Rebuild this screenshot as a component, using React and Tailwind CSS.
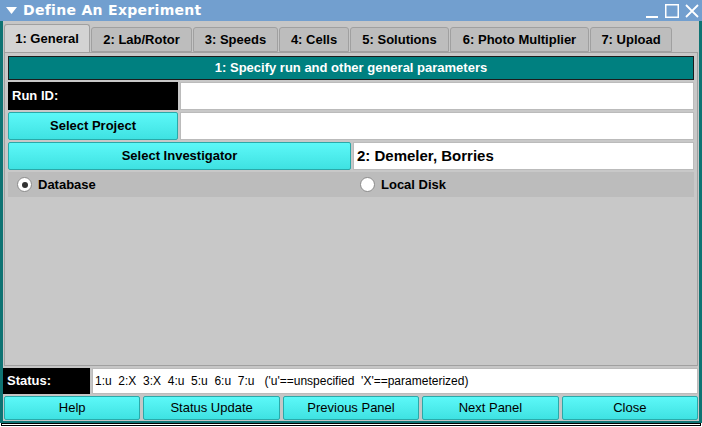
import React from "react";

const titleFont = { fontFamily: '"DejaVu Sans", Verdana, sans-serif' };
const font = { fontFamily: '"Liberation Sans", Arial, Helvetica, sans-serif' };

function Tab({ label, active, w }) {
  return (
    <div
      className={
        active
          ? "h-[29px] -mb-px flex items-center justify-center rounded-t-[3px] border border-b-0 border-[#a0a0a0] bg-[#d3d3d3] text-[13px] font-bold text-black"
          : "h-[25px] flex items-center justify-center rounded-t-[3px] border border-[#a0a0a0] bg-[#bdbdbd] text-[13px] font-bold text-black"
      }
      style={{ width: w }}
    >
      {label}
    </div>
  );
}

function CyanBtn({ children, className = "", bold = true }) {
  return (
    <div
      className={
        "flex items-center justify-center rounded-[2px] border border-[#2aa9a9] bg-gradient-to-b from-[#5cf8f8] to-[#3ee2e2] text-[13px] text-black " +
        (bold ? "font-bold " : "") +
        className
      }
    >
      {children}
    </div>
  );
}

function Radio({ checked }) {
  return (
    <div className="flex h-[15px] w-[15px] items-center justify-center rounded-full border border-[#8a8a8a] bg-white">
      {checked && <div className="h-[6px] w-[6px] rounded-full bg-[#333]" />}
    </div>
  );
}

export default function App() {
  const tabs = [
    ["1: General", 86, true],
    ["2: Lab/Rotor", 101],
    ["3: Speeds", 85],
    ["4: Cells", 70],
    ["5: Solutions", 99],
    ["6: Photo Multiplier", 139],
    ["7: Upload", 82],
  ];
  return (
    <div className="relative h-[427px] w-[702px] overflow-hidden bg-white" style={font}>
      {/* title bar */}
      <div className="flex h-[21px] items-center bg-[#729fcf] pl-[6px] pr-[2px] text-white" style={titleFont}>
        <svg width="11" height="8" viewBox="0 0 11 8" className="mr-[6px]">
          <polygon points="0,0 11,0 5.5,7" fill="white" />
        </svg>
        <span className="text-[14px] font-bold tracking-[0.3px]">Define An Experiment</span>
        <div className="ml-auto flex items-center gap-[4px]">
          <svg width="16" height="16" viewBox="0 0 16 16">
            <rect x="2" y="13" width="12" height="2" fill="white" />
          </svg>
          <svg width="16" height="16" viewBox="0 0 16 16">
            <rect x="1.75" y="1.75" width="12.5" height="12.5" fill="none" stroke="white" strokeWidth="1.5" />
          </svg>
          <svg width="16" height="16" viewBox="0 0 16 16">
            <path d="M2 2 L14 14 M14 2 L2 14" stroke="white" strokeWidth="1.8" />
          </svg>
        </div>
      </div>

      {/* window body */}
      <div className="flex h-[402px] flex-col border-x-[3px] border-b-[2px] border-[#0e7373] bg-[#c6c6c6] pt-[3px]">
        {/* tabs */}
        <div className="flex h-[28px] items-end gap-[1px] pl-[1px]">
          {tabs.map(([l, w, a]) => (
            <Tab key={l} label={l} w={w} active={a} />
          ))}
        </div>
        {/* panel */}
        <div className="mx-[1px] flex h-[314px] flex-col border border-[#a0a0a0] bg-[#c8c8c8] px-[3px] pt-[3px]">
          <div className="flex h-[24px] items-center justify-center border border-[#1c1c1c] bg-[#008080] text-[13px] font-bold text-white">
            1: Specify run and other general parameters
          </div>
          <div className="mt-[2px] flex h-[28px] gap-[2px]">
            <div className="flex w-[170px] items-center bg-black pl-[4px] text-[13px] font-bold text-white">
              Run ID:
            </div>
            <div className="flex-1 border border-[#bbbbbb] bg-white" />
          </div>
          <div className="mt-[2px] flex h-[28px] gap-[2px]">
            <CyanBtn className="w-[170px]">Select Project</CyanBtn>
            <div className="flex-1 border border-[#bbbbbb] bg-white" />
          </div>
          <div className="mt-[2px] flex h-[28px] gap-[2px]">
            <CyanBtn className="w-[343px]">Select Investigator</CyanBtn>
            <div className="flex flex-1 items-center border border-[#bbbbbb] bg-white pl-[3px] text-[15px] font-bold text-black">
              2: Demeler, Borries
            </div>
          </div>
          <div className="mt-[2px] flex h-[25px] items-center bg-[#bcbcbc] text-[13px] font-bold text-black">
            <div className="flex w-[345px] items-center gap-[6px] pl-[9px]">
              <Radio checked />
              <span>Database</span>
            </div>
            <div className="flex items-center gap-[6px] pl-[7px]">
              <Radio />
              <span>Local Disk</span>
            </div>
          </div>
        </div>
        {/* status */}
        <div className="mt-[2px] flex h-[26px] gap-[2px] pr-[1px]">
          <div className="flex w-[87px] items-center bg-black pl-[4px] text-[13px] font-bold text-white">
            Status:
          </div>
          <div className="flex flex-1 items-center whitespace-pre border border-[#bbbbbb] bg-white pl-[2px] text-[12px] text-black">
            {"1:u  2:X  3:X  4:u  5:u  6:u  7:u   ('u'==unspecified  'X'==parameterized)"}
          </div>
        </div>
        <div className="mt-[2px] flex h-[24px] gap-[3px] px-[1px]">
          {["Help", "Status Update", "Previous Panel", "Next Panel", "Close"].map((b) => (
            <CyanBtn key={b} bold={false} className="flex-1">
              {b}
            </CyanBtn>
          ))}
        </div>
      </div>
      <div className="mx-[1px] h-[3px] border border-black bg-white" />
    </div>
  );
}
